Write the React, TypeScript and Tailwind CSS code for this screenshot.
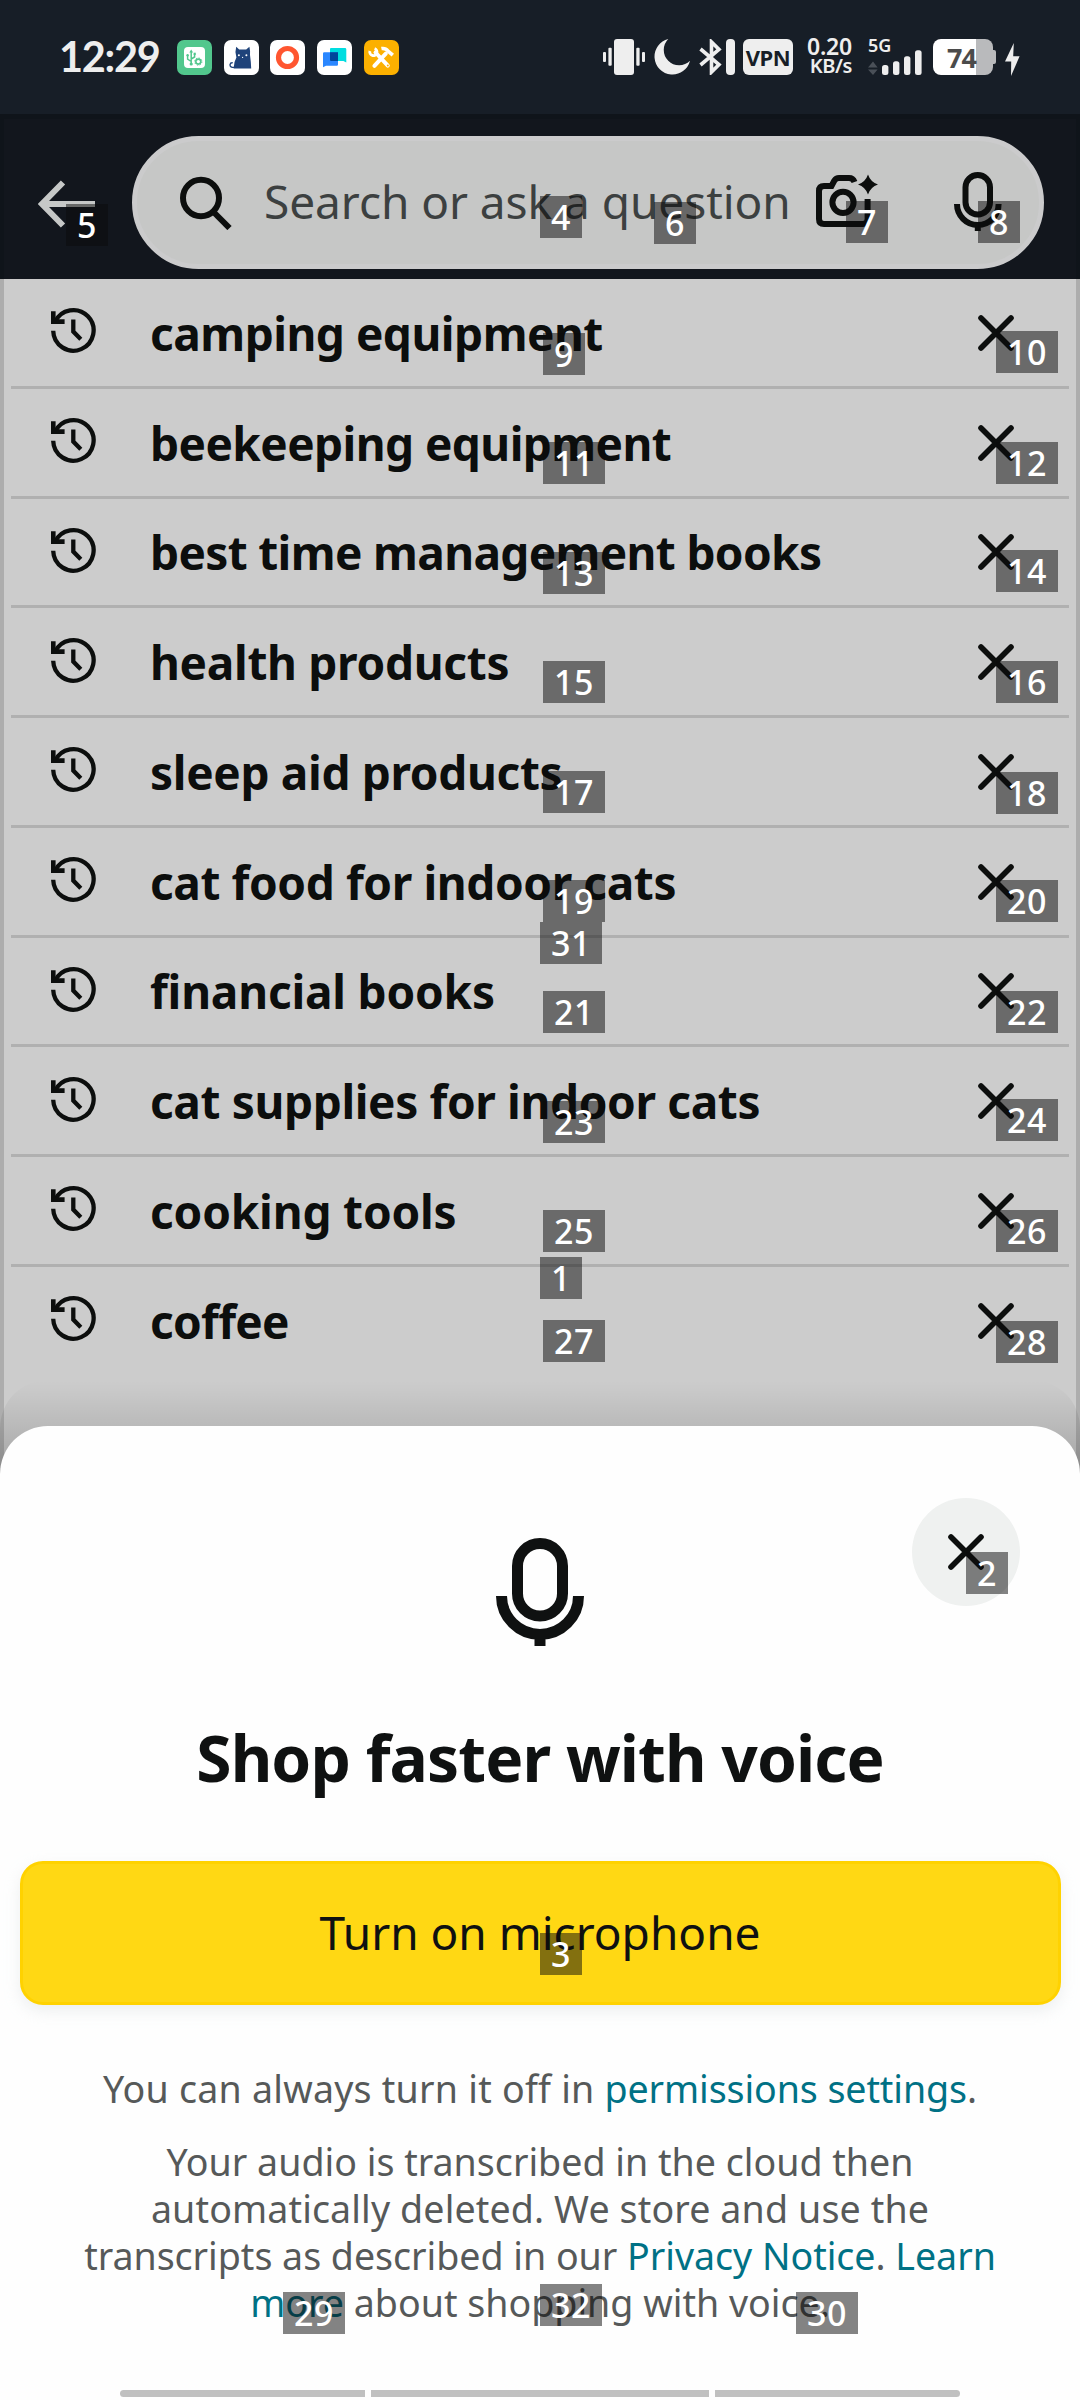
import React from 'react';

const searches: [string, string][] = [
  ['camping equipment', 'tracking-[-0.5px]'],
  ['beekeeping equipment', 'tracking-[-0.57px]'],
  ['best time management books', 'tracking-[-0.65px]'],
  ['health products', 'tracking-[-0.3px]'],
  ['sleep aid products', 'tracking-[-0.33px]'],
  ['cat food for indoor cats', 'tracking-[-0.4px]'],
  ['financial books', 'tracking-[-0.2px]'],
  ['cat supplies for indoor cats', 'tracking-[-0.37px]'],
  ['cooking tools', 'tracking-[-0.17px]'],
  ['coffee', 'tracking-[-0.7px]'],
];

// Element markers: [label, left, top]
const markers: [number, number, number][] = [
  [5, 66, 204], [4, 540, 196], [6, 654, 202], [7, 846, 201], [8, 978, 201],
  [9, 543, 333], [10, 996, 331], [11, 543, 442], [12, 996, 442],
  [13, 543, 552], [14, 996, 550], [15, 543, 661], [16, 996, 661],
  [17, 543, 771], [18, 996, 772], [19, 543, 880], [20, 996, 880],
  [31, 540, 922], [21, 543, 991], [22, 996, 991], [23, 543, 1101],
  [24, 996, 1099], [25, 543, 1210], [26, 996, 1210], [1, 540, 1257],
  [27, 543, 1320], [28, 996, 1321], [2, 966, 1552], [3, 540, 1933],
  [29, 283, 2292], [32, 540, 2284], [30, 796, 2292],
];

function Marker({ n, x, y }: { n: number; x: number; y: number }) {
  return (
    <div
      className={`absolute h-[42px] bg-[rgba(12,12,12,0.51)] pl-[11px] text-[34px] leading-[43px] font-medium tracking-[0.6px] text-white ${n > 9 ? 'w-[62px]' : 'w-[42px]'}`}
      style={{ left: x, top: y }}
    >
      {n}
    </div>
  );
}

function AppIcons() {
  return (
    <div className="ml-[15px] flex gap-[11.7px]">
      <svg className="size-[35px]" viewBox="0 0 35 35">
        <rect width="35" height="35" rx="7" fill="#52c78d" />
        <rect x="7" y="7" width="21" height="21" rx="4" fill="#fff" />
        <g stroke="#52c78d" strokeWidth="1.5" fill="none">
          <path d="M14.2 12V24M14.2 21.5L10.6 19V15.5M14.2 19L17.6 17V14" />
          <circle cx="21.3" cy="21.6" r="2.5" strokeWidth="1.6" />
          <circle cx="21.3" cy="21.6" r="3.6" strokeWidth="1" strokeDasharray="1.4 1.4" />
        </g>
        <path d="M12.3 12.6L14.2 9.5L16.1 12.6Z" fill="#52c78d" />
        <circle cx="14.2" cy="24" r="1.6" fill="#52c78d" />
        <circle cx="10.6" cy="15.3" r="1.2" fill="#52c78d" />
        <rect x="16.6" y="12.7" width="2.2" height="2.2" fill="#52c78d" />
      </svg>
      <svg className="size-[35px]" viewBox="0 0 35 35">
        <rect width="35" height="35" rx="7" fill="#fff" />
        <path d="M12.2 6.8L15.2 9.6H22.2L25.4 6.8Q26.4 11 26 15Q27 22 27.2 28.4H9.6Q9.8 22 12.4 17.6Q10.6 12 12.2 6.8Z" fill="#1f437a" />
        <path d="M10.5 27.4Q5.8 27.6 6 24.6Q6.4 22.8 8.2 22.8" fill="none" stroke="#1f437a" strokeWidth="1.4" strokeLinecap="round" />
        <circle cx="14.9" cy="15.2" r="1" fill="#fff" />
        <circle cx="22.4" cy="15.2" r="1" fill="#fff" />
        <circle cx="18.6" cy="17.4" r=".6" fill="#fff" />
      </svg>
      <svg className="size-[35px]" viewBox="0 0 35 35">
        <rect width="35" height="35" rx="7" fill="#fff" />
        <circle cx="17.5" cy="17.5" r="9" fill="none" stroke="#ff5630" strokeWidth="5.2" />
      </svg>
      <svg className="size-[35px]" viewBox="0 0 35 35">
        <rect width="35" height="35" rx="7" fill="#fff" />
        <path d="M14 8H28Q29.3 8 29.3 9.4V22.5L26.4 21H13V9Q13 8 14 8Z" fill="#00dde0" />
        <path d="M7.2 12.2H21V24.5Q21 25.7 19.8 25.7H9L6 27.3V13.4Q6 12.2 7.2 12.2Z" fill="#2a87ff" />
        <path d="M13 12.2H21V21H14Q13 21 13 20Z" fill="#00459b" />
      </svg>
      <svg className="size-[35px]" viewBox="0 0 35 35">
        <rect width="35" height="35" rx="7" fill="#fcb000" />
        <g fill="none" stroke="#fff">
          <path d="M11.5 12.5L23.8 25.6" strokeWidth="4" strokeLinecap="round" />
          <path d="M10.4 25.8L21.8 13.6" strokeWidth="4" strokeLinecap="round" />
          <path d="M10.6 8.6A3.6 3.6 0 1 1 5.900 11" strokeWidth="2.8" />
          <path d="M17.400 8.600Q21.500 7.800 24 11L28.800 15.200" strokeWidth="3.600" />
        </g>
        <circle cx="23.8" cy="25.6" r="1" fill="#fcb000" />
      </svg>
    </div>
  );
}

function StatusIcons() {
  return (
    <div className="ml-auto flex h-9 items-center text-[#eeeeee]">
      <svg className="h-9 w-[42px]" viewBox="0 0 42 36" fill="currentColor">
        <rect x="11" width="20" height="36" rx="3" />
        <rect x="5.4" y="8.7" width="3.3" height="18" rx="1" />
        <rect x="0" y="13" width="3" height="10" rx="1" />
        <rect x="33.3" y="8.7" width="3.3" height="18" rx="1" />
        <rect x="39" y="13" width="3" height="10" rx="1" />
      </svg>
      <svg className="ml-[9px] h-9 w-9" viewBox="0 0 36 36" fill="currentColor">
        <path d="M14.3 0A18 18 0 1 0 36 21.8A14 14 0 0 1 14.3 0Z" />
      </svg>
      <svg className="ml-[9px] h-9 w-9" viewBox="0 0 36 36">
        <path d="M1.5 10L20 25.5L12.5 33V3L20 10.5L1.5 26" fill="none" stroke="currentColor" strokeWidth="3.6" />
        <rect x="27" width="9" height="36" rx="4" fill="currentColor" />
      </svg>
      <div className="ml-[8px] flex h-9 w-[50px] items-center justify-center rounded-[6px] bg-[#eeeeee] text-[22px] font-bold leading-none tracking-[-0.5px] text-[#171e27]">VPN</div>
      <div className="ml-[12px] flex h-[38px] w-[47px] flex-col items-end text-right font-semibold">
        <span className="mt-[-1px] text-[23px] leading-[18px] tracking-[-0.2px]">0.20</span>
        <span className="text-[20px] leading-[21px] tracking-[-0.4px]">KB/s</span>
      </div>
      <div className="relative ml-[16px] h-9 w-[54px]">
        <span className="absolute left-0 top-[-2px] text-[18px] font-semibold leading-[17px] tracking-[-0.1px]">5G</span>
        <svg className="h-9 w-[54px]" viewBox="0 0 54 36" fill="currentColor">
          <path d="M0 28.5L5 22.5L9.6 28.5ZM0 30.5H9.6L5 36Z" fill="#4a5058" />
          <rect x="14" y="26" width="6.4" height="10" rx="2.5" />
          <rect x="25" y="22.3" width="6.4" height="13.7" rx="2.5" />
          <rect x="36" y="17.3" width="6.4" height="18.7" rx="2.5" />
          <rect x="47" y="11.3" width="6.6" height="24.7" rx="2.5" />
        </svg>
      </div>
      <div className="ml-[11px] flex h-9 items-center">
        <div className="flex h-9 w-[60px] items-center rounded-[8px] bg-[linear-gradient(to_right,#ffffff_72.5%,#b9babc_72.5%)] pl-[14px] text-[27px] font-bold leading-none tracking-[-1px] text-[#4b4b4b]">74</div>
        <div className="h-[14px] w-[3px] rounded-r-[2px] bg-[#b9babc]" />
      </div>
      <svg className="ml-[9px] mt-[5px] h-[33px] w-[15px]" viewBox="0 0 15 33" fill="currentColor">
        <path d="M8.8 0L0 18.5H6.2L6 33L14.6 13.2H8.2Z" />
      </svg>
    </div>
  );
}

function HistoryIcon() {
  return (
    <svg className="h-[47px] w-[47px]" viewBox="0 0 47 47" fill="none" stroke="#0c0e0d" strokeWidth="4.3">
      <path d="M3.2 23.8A20.2 20.3 0 1 0 5 15" />
      <path d="M3.3 4.2V14.6H14.6" strokeWidth="4.6" />
      <path d="M23.3 12.5V24.6L30.8 32.2" />
    </svg>
  );
}

function CloseIcon() {
  return (
    <svg className="h-9 w-9" viewBox="0 0 36 36" fill="none" stroke="#0c0e0d" strokeWidth="5.6" strokeLinecap="round">
      <path d="M3 3L33 33M33 3L3 33" />
    </svg>
  );
}

export default function App() {
  return (
    <div className="relative flex h-[2400px] w-[1080px] flex-col overflow-hidden bg-[#cccccc] font-['Noto_Sans',sans-serif] text-[#0c0e0d]">
      <div className="flex h-[114px] shrink-0 items-center bg-[#171e27] pr-[60px] pl-[59px]">
        <span className="mt-[-1px] w-[103px] text-[41.5px] font-bold leading-none tracking-[-1.3px] whitespace-nowrap text-[#eeeeee] font-['Lato','Noto_Sans',sans-serif]">12:29</span>
        <AppIcons />
        <StatusIcons />
      </div>

      <div className="flex h-[165px] shrink-0 border-x-4 border-t-[5px] border-x-[#0f141a] border-t-[#0f141a] bg-[#12161d] pt-[17px] pl-[34px]">
        <svg className="mt-[44px] h-[48px] w-[57px]" viewBox="0 0 57 48" fill="none" stroke="#c6c8c7" strokeWidth="6">
          <path d="M25 2.5L4 24L25 45.5M4 24H57" />
        </svg>
        <div className="ml-[37px] flex h-[133px] w-[912px] items-center rounded-full border-[5px] border-[#cbcbcc] bg-[#c6c7c6] pl-[43px]">
          <svg className="h-[54px] w-[54px]" viewBox="0 0 54 54" fill="none" stroke="#0c0e0d" strokeWidth="6">
            <ellipse cx="21" cy="22" rx="18" ry="18.2" />
            <path d="M33 35.5L49.5 52" />
          </svg>
          <span className="mt-[-3px] ml-[30px] w-[552px] text-[46px] leading-[60px] tracking-[-0.05px] whitespace-nowrap text-[#3c4040]">Search or ask a question</span>
          <svg className="mt-[-2px] h-[60px] w-[70px] -ml-[4px]" viewBox="0 0 70 60" fill="none" stroke="#0c0e0d" strokeWidth="6">
            <path d="M42.5 10Q41 6 37 6H27Q24 6 22.4 8.6L19.5 14H12Q7 14 7 19V47Q7 52 12 52H51Q55.6 52 55.6 47V27" />
            <circle cx="31" cy="30.3" r="10.6" />
            <path d="M56 2.5Q58.5 10 66 12.5Q58.5 15 56 22.5Q53.5 15 46 12.5Q53.5 10 56 2.5Z" fill="#0c0e0d" stroke="none" />
          </svg>
          <svg className="ml-[68px] mt-[-3px] h-[66px] w-[56px]" viewBox="0 0 56 66" fill="none" stroke="#0c0e0d" strokeWidth="6">
            <rect x="15.5" y="7" width="24.5" height="39.5" rx="12.25" />
            <path d="M7 36A20.8 21 0 0 0 48.6 36M27.8 57V63" />
          </svg>
        </div>
      </div>

      <div className="h-[1197px] shrink-0 border-x-4 border-[#adadad]">
        {searches.map(([s, tracking], i) => (
          <div
            key={s}
            className={`mx-[7px] flex h-[109.75px] items-center border-b-[3px] pl-[39px] ${i === searches.length - 1 ? 'border-transparent' : 'border-[#b0b0b0]'}`}
          >
            <div className="mt-[-3px]"><HistoryIcon /></div>
            <span className={`mt-[1px] ml-[53px] w-[828px] text-[46px] leading-[60px] font-bold whitespace-nowrap ${tracking}`}>{s}</span>
            <div className="mt-px"><CloseIcon /></div>
          </div>
        ))}
      </div>

      <div className="absolute inset-x-0 top-[1380px] h-[120px] rounded-t-[48px] bg-[linear-gradient(to_bottom,rgba(0,0,0,0)_0px,rgba(0,0,0,0.02)_12px,rgba(0,0,0,0.09)_46px,rgba(0,0,0,0.2)_92px)]" />

      <div className="relative -mt-[50px] flex h-[974px] shrink-0 flex-col items-center rounded-t-[48px] bg-[#fefefe] pt-[112px]">
        <div className="absolute top-[72px] right-[60px] flex size-[108px] items-center justify-center rounded-full bg-[#eff1f0]">
          <CloseIcon />
        </div>
        <svg className="h-[108px] w-[88px]" viewBox="0 0 88 108" fill="none" stroke="#0f1111" strokeWidth="11">
          <rect x="21.5" y="5.5" width="45" height="72.5" rx="22.5" />
          <path d="M5.5 58A38.5 38.5 0 0 0 82.5 58M44 98V108" />
        </svg>
        <h1 className="mt-[72px] text-[64px] leading-[80px] font-bold tracking-[-0.9px] text-[#0f1111]">Shop faster with voice</h1>
        <button className="mt-[63px] h-[144px] w-[1041px] rounded-[23px] border-[3px] border-[#ffd200] bg-[#ffd814] pb-[2px] text-[46px] text-[#0f1111] shadow-[0_6px_15px_rgba(213,217,217,0.4)]">Turn on microphone</button>
        <p className="mt-[60px] text-[37.6px] leading-[47px] whitespace-nowrap text-[#565959]">
          <span className="tracking-[0.22px]">You can always turn it off in </span><a className="text-[#007185] tracking-[-0.1px]">permissions settings</a>.
        </p>
        <div className="mt-[26px] flex flex-col items-center text-[37.6px] leading-[47px] whitespace-nowrap text-[#565959]">
          <span>Your audio is transcribed in the cloud then</span>
          <span className="tracking-[0.12px]">automatically deleted. We store and use the</span>
          <span className="tracking-[-0.03px]">transcripts as described in our <a className="text-[#007185]">Privacy Notice</a>. <a className="text-[#007185]">Learn</a></span>
          <span><a className="text-[#007185]">more</a> about shopping with voice.</span>
        </div>
        <div className="mt-[64px] flex h-[7px] w-[840px] gap-[6px]">
          <div className="w-[245px] rounded-l-full bg-[#c0c0c0]" />
          <div className="flex-1 bg-[#c0c0c0]" />
          <div className="w-[245px] rounded-r-full bg-[#c0c0c0]" />
        </div>
      </div>

      {markers.map(([n, x, y]) => (
        <Marker key={n} n={n} x={x} y={y} />
      ))}
    </div>
  );
}
